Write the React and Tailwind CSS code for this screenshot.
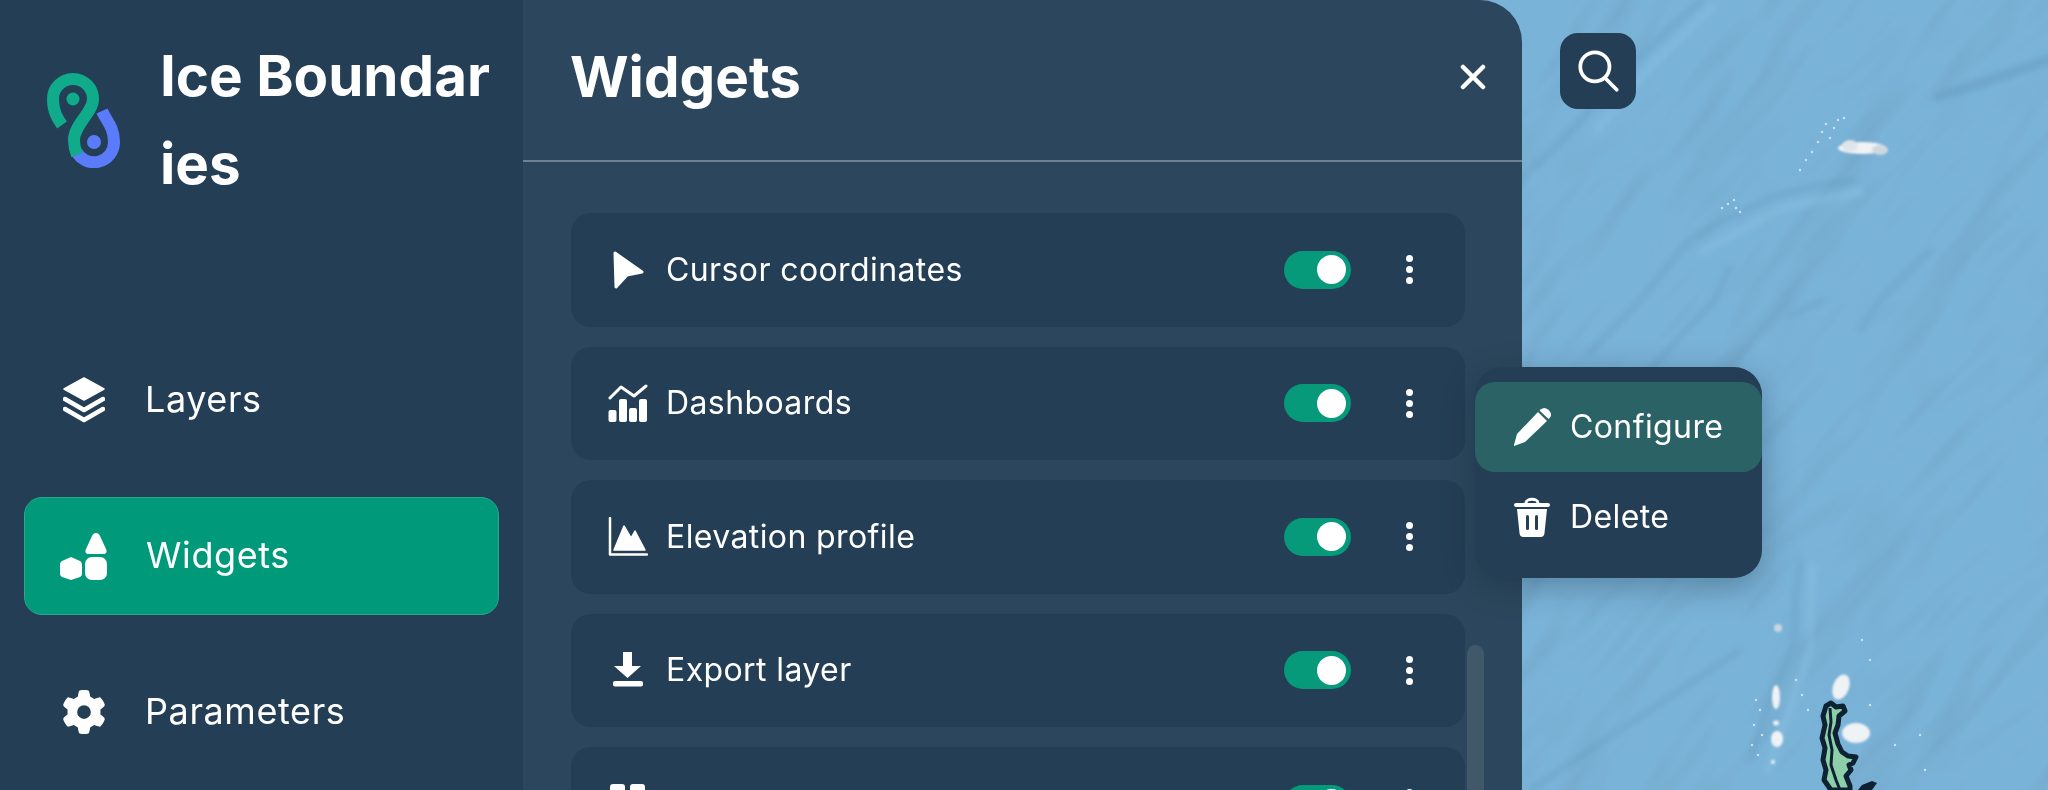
import React from 'react';
import { FaGear } from 'react-icons/fa6';

const sans = 'font-["Inter","Liberation_Sans",sans-serif]';

// Brand mark: two interlocked pins
const Logo = () => (
  <svg width="73" height="96" viewBox="0 0 73 96" fill="none" className="shrink-0">
    <path d="M55 39 C59 48 67 55 67 70 A20 20 0 0 1 29 79" stroke="#5b7cfa" strokeWidth="12" />
    <circle cx="47" cy="70" r="7" fill="#5b7cfa" />
    <path d="M15 53 C10 46 6 39 6 27 A20 20 0 0 1 46 27 C46 41 27 52 27 68 C27 73 28 78 30 83" stroke="#10ab8a" strokeWidth="12" />
    <circle cx="26" cy="27" r="6.500" fill="#10ab8a" />
  </svg>
);

const LayersIcon = () => (
  <svg width="42" height="46" viewBox="0 0 42 46" fill="none">
    <path d="M21 1 L41 12 L21 23 L1 12 Z" fill="white" stroke="white" strokeWidth="1.500" strokeLinejoin="round" />
    <path d="M2 22 L21 33 L40 22" stroke="white" strokeWidth="4.500" strokeLinecap="round" strokeLinejoin="round" />
    <path d="M2 32 L21 43 L40 32" stroke="white" strokeWidth="4.500" strokeLinecap="round" strokeLinejoin="round" />
  </svg>
);

const ShapesIcon = () => (
  <svg width="48" height="48" viewBox="0 0 48 48" fill="white" className="-ml-[4px]">
    <path d="M37 1 C39 1 40 2 41 4 L47 17 C48.500 20 47 22 44 22 L30 22 C27 22 25.500 20 27 17 L33 4 C34 2 35 1 37 1 Z" />
    <path d="M12 25 L21 29 C22.500 30 23 31 23 33 L23 41 C23 43 22.500 44 21 45 L12 48 L3 45 C1.500 44 1 43 1 41 L1 33 C1 31 1.500 30 3 29 Z" />
    <rect x="26" y="25" width="22" height="23" rx="7" />
  </svg>
);

const CursorIcon = () => (
  <svg width="40" height="42" viewBox="0 0 40 42" fill="white" stroke="white" strokeWidth="3" strokeLinejoin="round">
    <path d="M7 4 L34 23 L19 26 L8 38 Z" />
  </svg>
);

const DashboardIcon = () => (
  <svg width="40" height="38" viewBox="0 0 40 38" fill="none">
    <path d="M2 14 L13 3 L26 12 L38 2" stroke="white" strokeWidth="3" strokeLinecap="round" strokeLinejoin="round" />
    <rect x="0.500" y="26" width="8" height="12" rx="2" fill="white" />
    <rect x="11" y="15" width="8" height="23" rx="2" fill="white" />
    <rect x="21" y="24" width="8" height="14" rx="2" fill="white" />
    <rect x="31" y="15" width="8" height="23" rx="2" fill="white" />
  </svg>
);

const ElevationIcon = () => (
  <svg width="40" height="40" viewBox="0 0 40 40" fill="none">
    <path d="M2 1 V37.500 H39" stroke="white" strokeWidth="2.500" strokeLinecap="round" strokeLinejoin="round" />
    <path d="M6 33 L16 9 L23 21 L27 14 L37 33 Z" fill="white" stroke="white" strokeWidth="1.500" strokeLinejoin="round" />
  </svg>
);

const ExportIcon = () => (
  <svg width="40" height="36" viewBox="0 0 40 36" fill="white">
    <path d="M15 0 H24 V14 H33 L19.500 26 L6 14 H15 Z" />
    <rect x="5" y="29" width="30" height="5.500" rx="2" />
  </svg>
);

const GridIcon = () => (
  <svg width="40" height="40" viewBox="0 0 40 40" fill="white">
    <rect x="2" y="0" width="15" height="15" rx="3" />
    <rect x="22" y="0" width="15" height="15" rx="3" />
    <rect x="2" y="20" width="15" height="15" rx="3" />
    <rect x="22" y="20" width="15" height="15" rx="3" />
  </svg>
);

const PencilIcon = () => (
  <svg width="38" height="38" viewBox="0 0 38 38" fill="white">
    <path d="M25 4 L34 13 L12 34 L1 38 L1 37 L4 26 Z" />
    <path d="M27.500 1.500 C30 -0.500 32.500 -0.500 35 1.500 L36.500 3 C38.500 5.500 38.500 8 36.500 10 L35.500 11 L26.500 2.500 Z" />
  </svg>
);

const TrashIcon = () => (
  <svg width="36" height="40" viewBox="0 0 36 40" fill="none">
    <path d="M12 6 C12 1 24 1 24 6" stroke="white" strokeWidth="3" />
    <rect x="0" y="6" width="36" height="4" rx="2" fill="white" />
    <path d="M3 12 H33 L30.500 36 C30.300 38.500 29 40 26.500 40 H9.500 C7 40 5.700 38.500 5.500 36 Z" fill="white" />
    <rect x="12" y="18" width="3" height="15" rx="1.500" fill="#243e55" />
    <rect x="21" y="18" width="3" height="15" rx="1.500" fill="#243e55" />
  </svg>
);

const stipple = [
  [1822, 132], [1826, 124], [1830, 138], [1834, 128], [1818, 142], [1838, 120], [1844, 118], [1812, 152],
  [1806, 160], [1800, 170], [1722, 208], [1728, 204], [1734, 200], [1736, 208], [1740, 212],
  [1756, 700], [1760, 710], [1754, 725], [1762, 735], [1752, 745], [1758, 755], [1796, 680], [1802, 695],
  [1808, 710], [1862, 640], [1870, 660], [1870, 705], [1895, 745], [1920, 735], [1925, 770],
];

// Sea-floor relief: lit noise plus the main ridges drawn by hand
const MapBackdrop = () => (
  <svg className="absolute inset-0" width="2048" height="790" viewBox="0 0 2048 790">
    <defs>
      <filter id="relief" x="0" y="0" width="100%" height="100%">
        <feTurbulence type="fractalNoise" baseFrequency="0.004 0.014" numOctaves="3" seed="7" />
        <feDiffuseLighting surfaceScale="26" diffuseConstant="1.150" lightingColor="white">
          <feDistantLight azimuth="200" elevation="60" />
        </feDiffuseLighting>
      </filter>
      <filter id="soft"><feGaussianBlur stdDeviation="3" /></filter>
      <filter id="cloud"><feGaussianBlur stdDeviation="0.800" /></filter>
    </defs>
    <rect width="2048" height="790" fill="#7ab3d8" />
    <rect x="1000" y="-700" width="1800" height="1800" transform="rotate(-48 1800 400)" filter="url(#relief)" opacity="0.2" style={{ mixBlendMode: 'multiply' }} />
    <g fill="none" stroke="#5f93b5" strokeWidth="4" strokeLinecap="round" strokeLinejoin="round" opacity="0.45" filter="url(#soft)">
      <path d="M1702 0 L1670 28 L1644 53 L1600 95 L1582 120 L1536 167" />
      <path d="M1855 180 L1815 186 L1772 197 L1725 220 L1689 240 L1640 300 L1590 353" />
      <path d="M1730 267 L1715 300 L1689 327 L1650 370" />
      <path d="M2048 60 L1990 80 L1937 97" strokeWidth="9" />
      <path d="M1800 560 L1795 600 L1795 640 L1770 700 L1750 760" />
      <path d="M1740 650 L1680 690 L1620 730 L1530 790" />
      <path d="M1930 250 L1880 300 L1860 330" />
      <path d="M1824 300 L1790 316" />
    </g>
    <g fill="none" stroke="#93c8e8" strokeWidth="7" strokeLinecap="round" opacity="0.35" filter="url(#soft)">
      <path d="M1712 8 L1655 62 L1596 130" />
      <path d="M1860 192 L1782 208 L1702 252" />
      <path d="M1812 565 L1810 650 L1768 770" />
    </g>
    <g fill="#e8f0f4">
      {stipple.map(([x, y]) => <circle key={`${x}-${y}`} cx={x} cy={y} r="1.200" opacity="0.8" />)}
    </g>
    <g fill="#f0f3f5" filter="url(#cloud)">
      <ellipse cx="1862" cy="148" rx="24" ry="6" />
      <ellipse cx="1850" cy="146" rx="8" ry="6" fill="#dfe6ea" />
      <ellipse cx="1880" cy="150" rx="8" ry="5" fill="#cfd8de" />
      <ellipse cx="1776" cy="697" rx="4" ry="12" />
      <ellipse cx="1841" cy="687" rx="8" ry="13" transform="rotate(20 1841 687)" />
      <ellipse cx="1856" cy="733" rx="14" ry="10" />
      <ellipse cx="1777" cy="739" rx="6" ry="8" />
      <ellipse cx="1778" cy="628" rx="4" ry="4" fill="#c8d6de" />
      <ellipse cx="1776" cy="723" rx="3" ry="2.500" />
      <ellipse cx="1773" cy="762" rx="2" ry="2" />
    </g>
    <path d="M1826 706 L1831 703 L1836 707 L1843 706 L1845 711 L1839 716 L1838 725 L1835 733 L1838 744 L1842 752 L1848 756 L1856 757 L1853 763 L1849 765 L1851 770 L1846 776 L1850 786 L1850 790 L1831 790 L1824 780 L1826 770 L1823 760 L1825 748 L1822 738 L1825 725 L1823 716 Z" fill="#8ccfa9" stroke="#0f2233" strokeWidth="5" strokeLinejoin="round" />
    <path d="M1830 708 L1831 722 L1829 735 L1832 750 L1831 765 L1836 780 L1840 790" fill="none" stroke="#0f2233" strokeWidth="3" strokeLinejoin="round" />
    <path d="M1858 790 L1862 785 L1872 781 L1877 783 L1872 790 Z" fill="#0f2233" />
  </svg>
);

const Toggle = () => (
  <div className="w-[67px] h-[38px] rounded-full bg-[#069a7a] flex items-center justify-end pr-[5px] ml-auto shrink-0">
    <div className="w-[29px] h-[29px] rounded-full bg-white" />
  </div>
);

const Kebab = () => (
  <div className="flex flex-col gap-[4px] ml-[55px] mr-[52px] shrink-0">
    <span className="w-[7px] h-[7px] rounded-full bg-white" />
    <span className="w-[7px] h-[7px] rounded-full bg-white" />
    <span className="w-[7px] h-[7px] rounded-full bg-white" />
  </div>
);

const WidgetRow = ({ icon: Icon, label }) => (
  <div className="h-[113.500px] shrink-0 rounded-[20px] bg-[#243e55] flex items-center pl-[37px]">
    <div className="w-[40px] flex justify-center shrink-0"><Icon /></div>
    <span className="ml-[18px] text-[32px] leading-none font-normal tracking-[0.4px] text-white">{label}</span>
    <Toggle />
    <Kebab />
  </div>
);

const navItems = [
  { icon: LayersIcon, label: 'Layers' },
  { icon: ShapesIcon, label: 'Widgets', active: true },
  { icon: () => <FaGear size={44} color="white" />, label: 'Parameters' },
];

const widgets = [
  { icon: CursorIcon, label: 'Cursor coordinates' },
  { icon: DashboardIcon, label: 'Dashboards' },
  { icon: ElevationIcon, label: 'Elevation profile' },
  { icon: ExportIcon, label: 'Export layer' },
  { icon: GridIcon, label: '' },
];

export default function App() {
  return (
    <div className={`relative w-[2048px] h-[790px] overflow-hidden ${sans}`}>
      <MapBackdrop />

      <div className="relative flex h-full">
        {/* Sidebar */}
        <aside className="w-[523px] shrink-0 bg-[#243e55] text-white">
          <div className="flex items-center pl-[47px] pt-[32px]">
            <Logo />
            <h1 className="ml-[40px] w-[336px] break-all text-[56.500px] leading-[88px] font-bold text-white">Ice Boundaries</h1>
          </div>
          <nav className="mt-[133px] px-[24px] flex flex-col gap-[38px]">
            {navItems.map((item) => (
              <div
                key={item.label}
                className={`h-[118px] rounded-[18px] flex items-center pl-[36px] ${item.active ? 'bg-[#009a7b] border border-[#2aa88f]' : ''}`}
              >
                <div className="w-[48px] flex justify-center shrink-0"><item.icon /></div>
                <span className="ml-[37px] pb-[2px] text-[36px] leading-none font-normal tracking-[0.6px]">{item.label}</span>
              </div>
            ))}
          </nav>
        </aside>

        {/* Widgets panel */}
        <section className="w-[999px] shrink-0 bg-[#2c475d] rounded-tr-[42px] flex flex-col">
          <header className="h-[162px] shrink-0 border-b-2 border-[#6e8291] flex items-center justify-between pl-[47px] pr-[36px] pb-[6px]">
            <h2 className="text-[56.500px] leading-none font-bold text-white">Widgets</h2>
            <svg width="26" height="26" viewBox="0 0 26 26" fill="none" stroke="white" strokeWidth="4.500" strokeLinecap="round">
              <path d="M3 3 L23 23 M23 3 L3 23" />
            </svg>
          </header>
          <div className="pt-[51px] pl-[48px] pr-[57px] flex flex-col gap-[20px]">
            {widgets.map((w) => (
              <WidgetRow key={w.label || 'grid'} icon={w.icon} label={w.label} />
            ))}
          </div>
        </section>
      </div>

      {/* Scroll thumb */}
      <div className="absolute left-[1467px] top-[645px] w-[17px] h-[160px] rounded-full bg-[#41586b]" />

      {/* Search button */}
      <button className="absolute left-[1560px] top-[33px] w-[76px] h-[76px] rounded-[18px] bg-[#243e55] flex items-center justify-center">
        <svg width="50" height="50" viewBox="0 0 24 24" fill="none" stroke="white" strokeWidth="1.800" strokeLinecap="round">
          <circle cx="10.500" cy="10" r="7" />
          <path d="M15.500 15.500 L21 21" />
        </svg>
      </button>

      {/* Row menu */}
      <div className="absolute left-[1475px] top-[367px] w-[287px] h-[211px] rounded-[28px] bg-[#243e55] pt-[15px] shadow-[0_8px_32px_rgba(10,25,40,0.3)] text-white text-[32px] leading-none font-normal tracking-[0.4px]">
        <div className="h-[90px] rounded-[20px] bg-[#2a6265] flex items-center pl-[38px]">
          <PencilIcon />
          <span className="ml-[19px]">Configure</span>
        </div>
        <div className="h-[90px] flex items-center pl-[39px]">
          <TrashIcon />
          <span className="ml-[20px]">Delete</span>
        </div>
      </div>
    </div>
  );
}
